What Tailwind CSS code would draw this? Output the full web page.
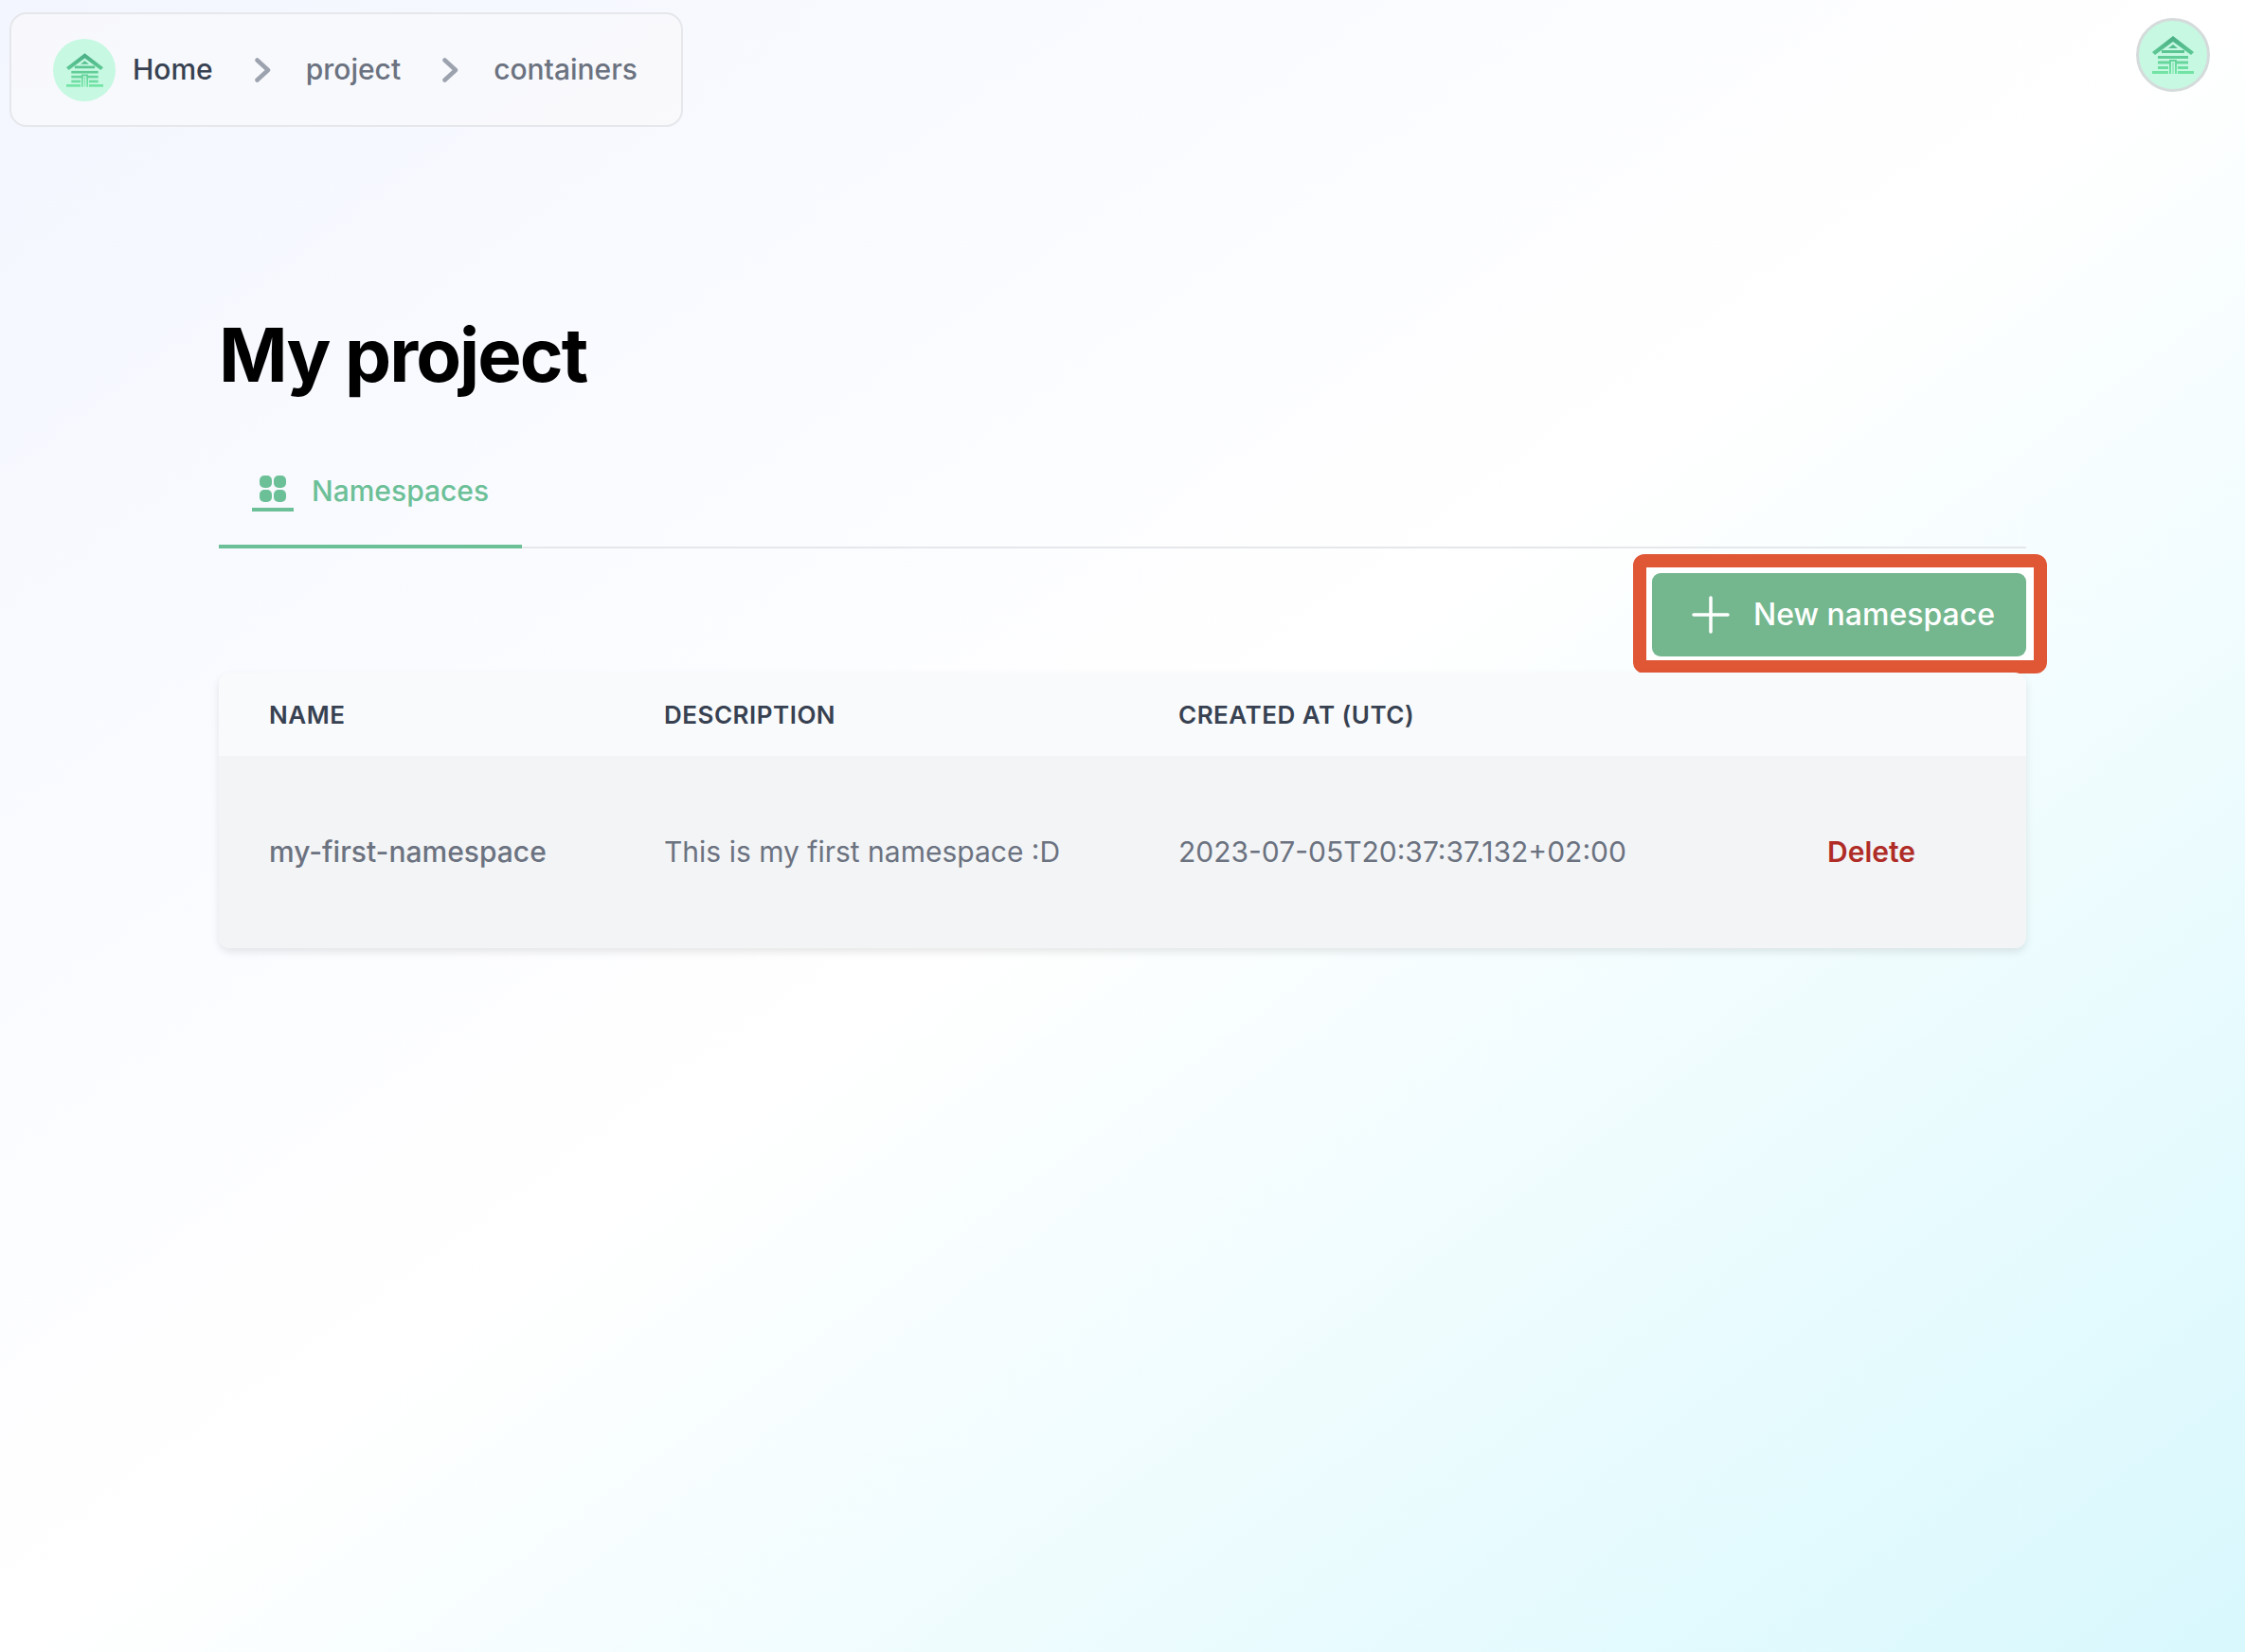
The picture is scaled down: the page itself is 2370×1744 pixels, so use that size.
<!DOCTYPE html>
<html><head><meta charset="utf-8"><title>My project</title>
<script src="https://cdn.jsdelivr.net/npm/@tailwindcss/browser@4"></script></head>
<body class="font-['Inter',sans-serif] antialiased">
<svg class="absolute w-0 h-0"><defs>
<linearGradient id="hg" gradientUnits="userSpaceOnUse" x1="0" y1="0" x2="0" y2="40"><stop offset="0" stop-color="#4aae85"/><stop offset="1" stop-color="#74e6a6"/></linearGradient>
<symbol id="house" viewBox="0 0 44 40">
<g fill="url(#hg)">
<path d="M22 0 L44 17 L41 20 L22 6 L3 20 L0 17 Z"/>
<path d="M22 9 L27 13 H17 Z"/>
<rect x="10" y="15" width="24" height="3"/>
<rect x="6" y="21" width="32" height="3"/>
<rect x="6" y="26.500" width="14" height="3"/><rect x="24" y="26.500" width="14" height="3"/>
<rect x="6" y="32" width="11" height="3"/><rect x="27" y="32" width="11" height="3"/>
<rect x="0" y="37" width="17" height="3"/><rect x="27" y="37" width="17" height="3"/>
<path d="M18 25 H26 V40 H24 V27 H20 V40 H18 Z"/>
<rect x="21.300" y="28" width="1.400" height="12" opacity=".7"/>
</g></symbol>
</defs></svg>
<div class="relative w-[2370px] h-[1744px] overflow-hidden bg-linear-to-br from-[#f3f6ff] via-white via-50% to-[#d8f8fd]">
  <header class="flex items-start justify-between pl-[10px] pr-[37px] pt-[13px]">
    <nav class="flex items-center w-[711px] h-[121px] pl-[44px] rounded-[18px] border-2 border-[#e5e7eb] bg-[#f9fafb]/70 text-[30px] text-[#6b7280]">
      <span class="flex items-center justify-center w-[66px] h-[66px] rounded-full bg-[#c6f8e2]">
        <svg class="w-[39px] h-[36px]"><use href="#house"/></svg>
      </span>
      <span class="ml-[18px] font-medium text-[#374151]">Home</span>
      <svg class="ml-[44px] w-[17px] h-[26px] text-[#9ca3af]" viewBox="0 0 17 26" fill="none" stroke="currentColor" stroke-width="4.500" stroke-linecap="round" stroke-linejoin="round"><path d="M2.500 2.500 L14 13 L2.500 23.500"/></svg>
      <span class="ml-[37px] font-medium">project</span>
      <svg class="ml-[44px] w-[17px] h-[26px] text-[#9ca3af]" viewBox="0 0 17 26" fill="none" stroke="currentColor" stroke-width="4.500" stroke-linecap="round" stroke-linejoin="round"><path d="M2.500 2.500 L14 13 L2.500 23.500"/></svg>
      <span class="ml-[37px] font-medium">containers</span>
    </nav>
    <span class="flex items-center justify-center w-[78px] h-[78px] mt-[6px] rounded-full border-[3px] border-[#d5dbdb] bg-[#c6f8e2]">
      <svg class="w-[44px] h-[40px]"><use href="#house"/></svg>
    </span>
  </header>
  <main class="px-[231px]">
    <h1 class="mt-[194px] text-[78px] leading-[94px] font-bold tracking-tight text-black">My project</h1>
    <div class="mt-[45px] border-b-[2px] border-[#e5e7eb]">
      <div class="relative flex items-center w-[320px] h-[112px] pl-[35px] -mb-[2px] border-b-[4px] border-[#6cc097] text-[#6cc097]">
        <span class="flex flex-col items-center w-[44px]">
          <svg class="w-[28px] h-[28px]" viewBox="0 0 28 28" fill="currentColor"><rect x="0" y="0" width="13" height="13" rx="5"/><rect x="15" y="0" width="13" height="13" rx="5"/><rect x="0" y="15" width="13" height="13" rx="5"/><rect x="15" y="15" width="13" height="13" rx="5"/></svg>
          <span class="mt-[6px] w-[44px] h-[4px] bg-current"></span>
        </span>
        <span class="ml-[19px] -mt-[5px] text-[30px] font-medium">Namespaces</span>
      </div>
    </div>
    <div class="flex justify-end mt-[26px]">
      <button class="relative flex items-center w-[395px] h-[88px] pl-[42px] rounded-[9px] bg-[#74b78f] text-white text-[32px] font-medium">
        <span class="absolute -left-[20px] -right-[22px] -top-[20px] -bottom-[18px] rounded-[12px] border-[14px] border-[#e05735] bg-white"></span>
        <span class="absolute inset-0 rounded-[9px] bg-[#74b78f]"></span>
        <svg class="relative w-[40px] h-[40px]" viewBox="0 0 40 40" fill="none" stroke="currentColor" stroke-width="3.500" stroke-linecap="round"><path d="M20 2 V38 M2 20 H38"/></svg>
        <span class="relative ml-[25px]">New namespace</span>
      </button>
    </div>
    <div class="relative mt-[17px] rounded-[12px] overflow-hidden shadow-[0_4px_8px_rgba(0,0,0,0.1)]">
      <table class="w-full table-fixed text-left">
        <colgroup><col class="w-[470px]"><col class="w-[543px]"><col class="w-[685px]"><col></colgroup>
        <thead class="bg-[#f9fafb]">
          <tr class="h-[88px] text-[#374151] text-[26px] font-semibold uppercase tracking-[0.5px]">
            <th class="pl-[53px] font-semibold">Name</th>
            <th class="font-semibold">Description</th>
            <th class="font-semibold">Created at (UTC)</th>
            <th></th>
          </tr>
        </thead>
        <tbody class="bg-[#f3f4f6]">
          <tr class="h-[203px] text-[30px] text-[#6b7280]">
            <td class="pl-[53px] font-medium">my-first-namespace</td>
            <td>This is my first namespace :D</td>
            <td>2023-07-05T20:37:37.132+02:00</td>
            <td class="font-semibold text-[#b02d27]">Delete</td>
          </tr>
        </tbody>
      </table>
    </div>
  </main>
</div>
</body></html>
